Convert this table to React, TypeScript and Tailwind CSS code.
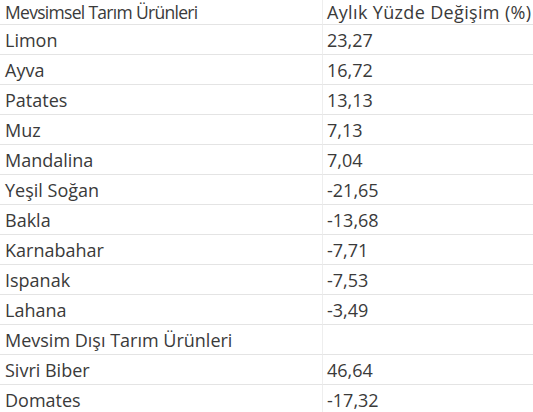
import React from "react";

const rows: [string, string][] = [
  ["Limon", "23,27"],
  ["Ayva", "16,72"],
  ["Patates", "13,13"],
  ["Muz", "7,13"],
  ["Mandalina", "7,04"],
  ["Yeşil Soğan", "-21,65"],
  ["Bakla", "-13,68"],
  ["Karnabahar", "-7,71"],
  ["Ispanak", "-7,53"],
  ["Lahana", "-3,49"],
  ["Mevsim Dışı Tarım Ürünleri", ""],
  ["Sivri Biber", "46,64"],
  ["Domates", "-17,32"],
];

export default function App() {
  return (
    <div
      className="w-[533px] h-[412px] overflow-hidden bg-white text-[#3a3a3a] text-[18px]"
      style={{ fontFamily: '"Open Sans", "Noto Sans", sans-serif' }}
    >
      <div className="grid grid-cols-[323px_1fr]">
        <div className="h-[25px] pl-[5px] flex items-center border-b border-r border-b-[#e4e4e4] border-r-[#eeeeee] text-[17.5px] tracking-[-0.7px] whitespace-nowrap">
          Mevsimsel Tarım Ürünleri
        </div>
        <div className="h-[25px] pl-[4px] flex items-center border-b border-[#e4e4e4] whitespace-nowrap tracking-[0.35px]">
          Aylık Yüzde Değişim (%)
        </div>
        {rows.map(([a, b], i) => (
          <React.Fragment key={i}>
            <div className="h-[30px] pl-[5px] pt-[1px] flex items-center border-b border-r border-b-[#e4e4e4] border-r-[#eeeeee] whitespace-nowrap">
              {a}
            </div>
            <div className="h-[30px] pl-[4px] pt-[1px] flex items-center border-b border-[#e4e4e4]">
              {b}
            </div>
          </React.Fragment>
        ))}
      </div>
    </div>
  );
}
